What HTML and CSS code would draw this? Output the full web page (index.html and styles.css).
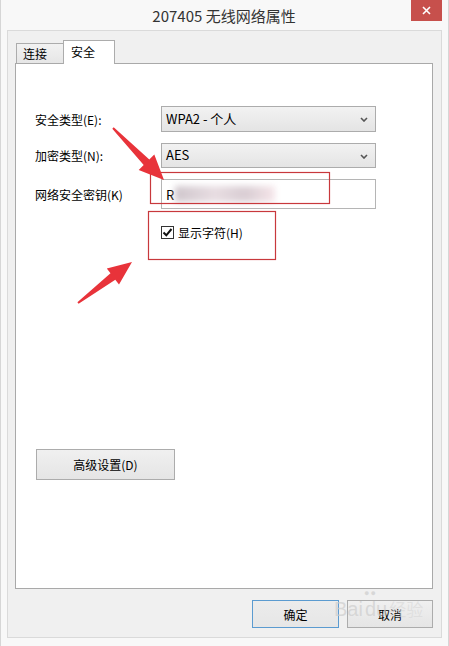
FILE: index.html
```html
<!DOCTYPE html>
<html lang="zh-CN">

<head>
  <meta charset="UTF-8">
  <meta name="viewport" content="width=device-width, initial-scale=1.0">
  <title>207405 无线网络属性</title>
  <link rel="stylesheet" href="styles.css">
</head>

<body>
  <div class="window">
    <div class="titlebar">
      <span class="title">207405 无线网络属性</span>
      <div class="close">
        <svg width="9" height="9" viewBox="0 0 9 9"><path d="M1 1L8 8M8 1L1 8" stroke="#fff" stroke-width="1.6"/></svg>
      </div>
    </div>

    <div class="frame">
      <div class="tabs">
        <div class="tab">连接</div>
        <div class="tab active">安全</div>
      </div>

      <div class="panel">
        <div class="row first">
          <span class="label">安全类型(E):</span>
          <div class="select">WPA2 - 个人
            <svg class="chevron" width="8" height="5" viewBox="0 0 8 5"><path d="M1 1L4 4L7 1" fill="none" stroke="#555" stroke-width="1.6"/></svg>
          </div>
        </div>
        <div class="row second">
          <span class="label">加密类型(N):</span>
          <div class="select">AES
            <svg class="chevron" width="8" height="5" viewBox="0 0 8 5"><path d="M1 1L4 4L7 1" fill="none" stroke="#555" stroke-width="1.6"/></svg>
          </div>
        </div>
        <div class="row third">
          <span class="label">网络安全密钥(K)</span>
          <div class="textbox">R<span class="masked"></span></div>
        </div>
        <div class="check-row">
          <span class="checkbox">
            <svg width="11" height="11" viewBox="0 0 11 11"><path d="M1.5 5.5L4.3 8.3L9.5 2" fill="none" stroke="#111" stroke-width="2"/></svg>
          </span>
          <span>显示字符(H)</span>
        </div>
        <button class="btn advanced">高级设置(D)</button>
      </div>

      <div class="footer">
        <button class="btn primary">确定</button>
        <button class="btn">取消</button>
      </div>
    </div>

    <!-- annotations drawn over the dialog -->
    <svg class="marks" width="449" height="646" viewBox="0 0 449 646">
      <rect x="150.5" y="172.5" width="179" height="31" fill="none" stroke="#c8383c" stroke-width="1.2"/>
      <rect x="148.5" y="211.5" width="127" height="48" fill="none" stroke="#c8383c" stroke-width="1.2"/>
      <polygon fill="#e8333a" points="112.3,128.7 143.7,165 138.7,169.9 164,180 154.3,154.5 149.3,159.4 113.7,127.3"/>
      <polygon fill="#e8333a" points="78.6,303.8 115.3,279.7 119,284.5 132,262 106.8,268.5 110.5,273.3 77.4,302.2"/>
    </svg>

    <div class="watermark">
      <span class="paw">●●</span>
      <span class="bai">Bai</span><span class="du">du</span><span class="jy">经验</span>
    </div>
  </div>
</body>

</html>
```

FILE: styles.css
```css
body {
  margin: 0;
  background-color: #f7f7f7;
  font-family: "Noto Sans CJK SC", "Noto Sans", sans-serif;
  font-size: 12px;
  color: #000;
}

.window {
  position: relative;
  width: 449px;
  height: 646px;
  box-sizing: border-box;
  border-left: 1px solid #d6d6d6;
  border-right: 1px solid #d6d6d6;
  background-color: #f8f8f8;
  overflow: hidden;
}

.titlebar {
  position: relative;
  height: 30px;
  display: flex;
  align-items: center;
  justify-content: center;
}

.title {
  font-size: 15px;
  color: #333;
  margin-left: -1px;
}

.close {
  position: absolute;
  top: 0;
  right: 6px;
  width: 31px;
  height: 21px;
  background-color: #c7504c;
  display: flex;
  align-items: center;
  justify-content: center;
}

.frame {
  margin: 0 6px;
  height: 608px;
  box-sizing: border-box;
  border: 1px solid #dadada;
  background-color: #f0f0f0;
  padding: 9px 8px 0 7px;
}

.tabs {
  display: flex;
  align-items: flex-end;
  height: 23px;
  padding-left: 1px;
}

.tab {
  height: 20px;
  box-sizing: border-box;
  width: 48px;
  padding-left: 6px;
  line-height: 19px;
  border: 1px solid #acacac;
  border-bottom: none;
  background: linear-gradient(#f2f2f2, #e6e6e6);
}

.tab.active {
  position: relative;
  z-index: 1;
  height: 24px;
  width: 52px;
  margin-left: -1px;
  margin-bottom: -1px;
  padding-left: 7px;
  line-height: 22px;
  background: #fff;
}

.panel {
  height: 526px;
  box-sizing: border-box;
  border: 1px solid #a9a9a9;
  background-color: #fff;
  padding: 42px 56px 0 19px;
  display: flex;
  flex-direction: column;
}

.row {
  display: flex;
  align-items: center;
}

.row.second,
.row.third {
  margin-top: 11px;
}

.label {
  width: 126px;
  flex-shrink: 0;
}

.select {
  position: relative;
  flex: 1;
  height: 26px;
  box-sizing: border-box;
  border: 1px solid #acacac;
  background: linear-gradient(#f2f2f2, #e4e4e4);
  padding-left: 4px;
  line-height: 23px;
  font-size: 13px;
}

.row.second .select {
  height: 25px;
  line-height: 22px;
}

.chevron {
  position: absolute;
  right: 7px;
  top: 10px;
}

.textbox {
  flex: 1;
  height: 30px;
  box-sizing: border-box;
  border: 1px solid #b5b5b5;
  background: #fff;
  padding-left: 4px;
  line-height: 27px;
  font-size: 13px;
  display: flex;
  align-items: center;
}

.masked {
  display: inline-block;
  width: 100px;
  height: 16px;
  margin-left: 1px;
  background: linear-gradient(90deg, #cfc6cc, #e8dde2 40%, #d9cdd3 70%, #f6e6ea);
  filter: blur(3px);
}

.check-row {
  display: flex;
  align-items: center;
  gap: 4px;
  margin-top: 17px;
  margin-left: 126px;
  height: 13px;
  font-size: 12px;
}

.checkbox {
  width: 13px;
  height: 13px;
  box-sizing: border-box;
  border: 1px solid #333;
  background: #fff;
  display: flex;
  align-items: center;
  justify-content: center;
}

.btn {
  font-family: inherit;
  font-size: 12px;
  color: #000;
  border: 1px solid #acacac;
  background: linear-gradient(#f0f0f0, #e5e5e5);
  padding: 0;
}

.advanced {
  align-self: flex-start;
  margin-top: 210px;
  margin-left: 1px;
  width: 139px;
  height: 31px;
}

.footer {
  display: flex;
  justify-content: flex-end;
  gap: 8px;
  margin-top: 11px;
}

.footer .btn {
  width: 86px;
  height: 28px;
}

.btn.primary {
  width: 87px;
  border-color: #5b9bd0;
  background: linear-gradient(#ececec, #e6e6e6);
}

.marks {
  position: absolute;
  top: 0;
  left: -1px;
  pointer-events: none;
}

.watermark {
  position: absolute;
  left: 333px;
  top: 596px;
  color: rgba(205, 205, 205, 0.7);
  font-family: "Liberation Sans", sans-serif;
  font-size: 20px;
  pointer-events: none;
}

.paw {
  position: absolute;
  left: 30px;
  top: -8px;
  font-size: 9px;
  letter-spacing: 1px;
}

.du {
  margin-left: 2px;
}

.jy {
  font-family: "Noto Sans CJK SC", sans-serif;
  font-size: 17px;
  margin-left: 2px;
  color: rgba(215, 215, 215, 0.6);
}
```
